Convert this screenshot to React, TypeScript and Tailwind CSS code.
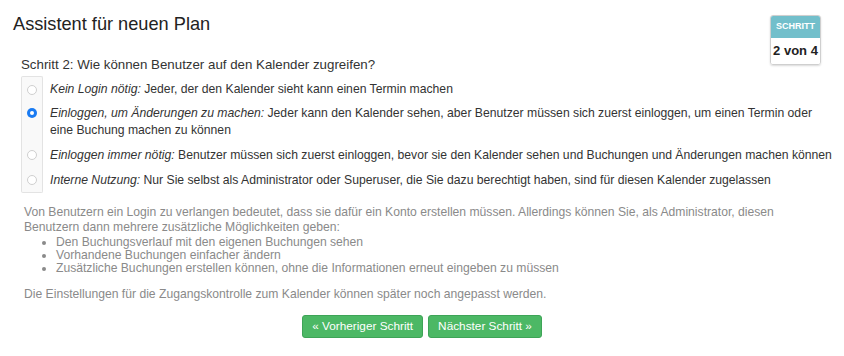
export default function App() {
  const options = [
    {
      label: "Kein Login nötig:",
      text: "Jeder, der den Kalender sieht kann einen Termin machen",
      checked: false,
    },
    {
      label: "Einloggen, um Änderungen zu machen:",
      text: "Jeder kann den Kalender sehen, aber Benutzer müssen sich zuerst einloggen, um einen Termin oder eine Buchung machen zu können",
      checked: true,
    },
    {
      label: "Einloggen immer nötig:",
      text: "Benutzer müssen sich zuerst einloggen, bevor sie den Kalender sehen und Buchungen und Änderungen machen können",
      checked: false,
    },
    {
      label: "Interne Nutzung:",
      text: "Nur Sie selbst als Administrator oder Superuser, die Sie dazu berechtigt haben, sind für diesen Kalender zugelassen",
      checked: false,
    },
  ];

  return (
    <div
      className="w-[844px] h-[356px] bg-white text-[#333] overflow-hidden"
      style={{ fontFamily: '"Liberation Sans", Arial, sans-serif' }}
    >
      <div className="flex justify-between pl-[13px] pr-[23px] pt-[13px]">
        <h1 className="text-[18.2px] leading-[22px] font-normal text-[#222]">
          Assistent für neuen Plan
        </h1>
        <div className="mt-[2px] w-[51px] h-[50px] rounded-[3px] border border-[#cfcfcf] shadow-[0_1px_2px_rgba(0,0,0,0.15)] overflow-hidden flex flex-col">
          <div className="h-[22px] bg-[#72bfcb] text-white text-[9px] font-bold flex items-center justify-center">
            SCHRITT
          </div>
          <div className="flex-1 bg-white text-[13px] font-bold text-[#222] flex items-center justify-center">
            2 von 4
          </div>
        </div>
      </div>

      <div className="pl-[21px] -mt-[9px]">
        <p className="text-[13.3px] leading-[17px]">
          Schritt 2: Wie können Benutzer auf den Kalender zugreifen?
        </p>
        <div className="mt-[3px] flex flex-col">
          {options.map((o, i) => (
            <div key={i} className="flex">
              <div
                className={
                  "w-[22px] shrink-0 bg-[#f9f9f9] border-x border-[#e3e3e3] flex justify-center " +
                  (i === 0 ? "border-t rounded-t-[2px] pt-[5px] " : "pt-[4px] ") +
                  (i === options.length - 1 ? "border-b rounded-b-[2px] pb-[4px]" : "")
                }
              >
                <span
                  className={
                    "mt-[3px] w-[10px] h-[10px] rounded-full flex items-center justify-center " +
                    (o.checked
                      ? "bg-[#1a7bf2]"
                      : "bg-white border border-[#cfcfcf]")
                  }
                >
                  {o.checked && (
                    <span className="w-[4px] h-[4px] rounded-full bg-white" />
                  )}
                </span>
              </div>
              <p
                className={
                  "pl-[7px] w-[791px] text-[12.2px] leading-[17px] " +
                  (i === 0 ? "pt-[5px] pb-[3px]" : "py-[4px]")
                }
              >
                <em>{o.label}</em> {o.text}
              </p>
            </div>
          ))}
        </div>
      </div>

      <div className="pl-[24px] pr-[40px] mt-[12px] text-[12.15px] leading-[15px] text-[#8a8a8a]">
        <p>
          Von Benutzern ein Login zu verlangen bedeutet, dass sie dafür ein Konto
          erstellen müssen. Allerdings können Sie, als Administrator, diesen
          Benutzern dann mehrere zusätzliche Möglichkeiten geben:
        </p>
        <ul className="list-disc pl-[32px] mt-[1px] leading-[13px]">
          <li>Den Buchungsverlauf mit den eigenen Buchungen sehen</li>
          <li>Vorhandene Buchungen einfacher ändern</li>
          <li>
            Zusätzliche Buchungen erstellen können, ohne die Informationen erneut
            eingeben zu müssen
          </li>
        </ul>
        <p className="mt-[12px]">
          Die Einstellungen für die Zugangskontrolle zum Kalender können später
          noch angepasst werden.
        </p>
      </div>

      <div className="mt-[13px] flex justify-center gap-[5px]">
        <button className="h-[23px] px-[9px] rounded-[3px] bg-[#4cb865] border border-[#3ea457] text-white text-[11.8px]">
          « Vorheriger Schritt
        </button>
        <button className="h-[23px] px-[9px] rounded-[3px] bg-[#4cb865] border border-[#3ea457] text-white text-[11.8px]">
          Nächster Schritt »
        </button>
      </div>
    </div>
  );
}
